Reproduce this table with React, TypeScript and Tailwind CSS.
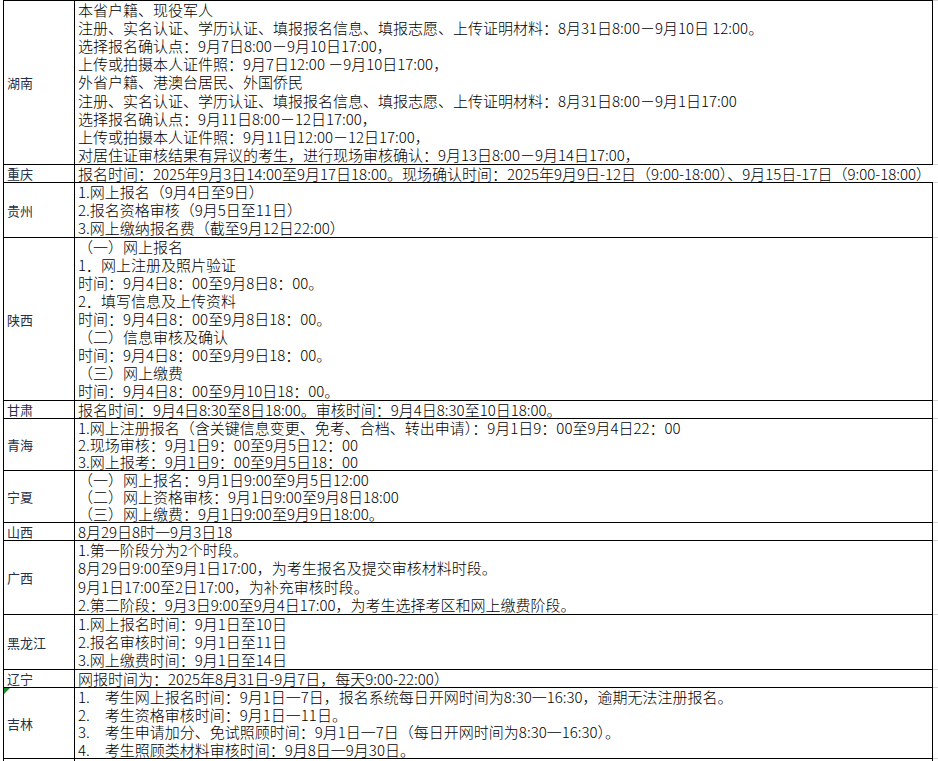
import React from "react";

type Row = {
  name: string;
  h: string;
  lh: number;
  lines: string[];
  overflow?: boolean;
  mark?: boolean;
};

const rows: Row[] = [
  {
    name: "湖南",
    h: "h-[164px]",
    lh: 18.1,
    lines: [
      "本省户籍、现役军人",
      "注册、实名认证、学历认证、填报报名信息、填报志愿、上传证明材料：8月31日8:00－9月10日 12:00。",
      "选择报名确认点：9月7日8:00－9月10日17:00，",
      "上传或拍摄本人证件照：9月7日12:00 －9月10日17:00，",
      "外省户籍、港澳台居民、外国侨民",
      "注册、实名认证、学历认证、填报报名信息、填报志愿、上传证明材料：8月31日8:00－9月1日17:00",
      "选择报名确认点：9月11日8:00－12日17:00，",
      "上传或拍摄本人证件照：9月11日12:00－12日17:00，",
      "对居住证审核结果有异议的考生，进行现场审核确认：9月13日8:00－9月14日17:00，",
    ],
  },
  {
    name: "重庆",
    h: "h-[18px]",
    lh: 17,
    overflow: true,
    lines: [
      "报名时间：2025年9月3日14:00至9月17日18:00。现场确认时间：2025年9月9日-12日（9:00-18:00）、9月15日-17日（9:00-18:00）",
    ],
  },
  {
    name: "贵州",
    h: "h-[55px]",
    lh: 18,
    lines: [
      "1.网上报名（9月4日至9日）",
      "2.报名资格审核（9月5日至11日）",
      "3.网上缴纳报名费（截至9月12日22:00）",
    ],
  },
  {
    name: "陕西",
    h: "h-[163px]",
    lh: 18,
    lines: [
      "（一）网上报名",
      "1．网上注册及照片验证",
      "时间：9月4日8：00至9月8日8：00。",
      "2．填写信息及上传资料",
      "时间：9月4日8：00至9月8日18：00。",
      "（二）信息审核及确认",
      "时间：9月4日8：00至9月9日18：00。",
      "（三）网上缴费",
      "时间：9月4日8：00至9月10日18：00。",
    ],
  },
  {
    name: "甘肃",
    h: "h-[18px]",
    lh: 17,
    lines: ["报名时间：9月4日8:30至8日18:00。审核时间：9月4日8:30至10日18:00。"],
  },
  {
    name: "青海",
    h: "h-[52px]",
    lh: 17,
    lines: [
      "1.网上注册报名（含关键信息变更、免考、合档、转出申请）：9月1日9：00至9月4日22：00",
      "2.现场审核：9月1日9：00至9月5日12：00",
      "3.网上报考：9月1日9：00至9月5日18：00",
    ],
  },
  {
    name: "宁夏",
    h: "h-[52px]",
    lh: 17,
    lines: [
      "（一）网上报名：9月1日9:00至9月5日12:00",
      "（二）网上资格审核：9月1日9:00至9月8日18:00",
      "（三）网上缴费：9月1日9:00至9月9日18:00。",
    ],
  },
  {
    name: "山西",
    h: "h-[18px]",
    lh: 17,
    lines: ["8月29日8时一9月3日18"],
  },
  {
    name: "广西",
    h: "h-[74px]",
    lh: 18.25,
    lines: [
      "1.第一阶段分为2个时段。",
      "8月29日9:00至9月1日17:00，为考生报名及提交审核材料时段。",
      "9月1日17:00至2日17:00，为补充审核时段。",
      "2.第二阶段：9月3日9:00至9月4日17:00，为考生选择考区和网上缴费阶段。",
    ],
  },
  {
    name: "黑龙江",
    h: "h-[55px]",
    lh: 18,
    lines: [
      "1.网上报名时间：9月1日至10日",
      "2.报名审核时间：9月1日至11日",
      "3.网上缴费时间：9月1日至14日",
    ],
  },
  {
    name: "辽宁",
    h: "h-[18px]",
    lh: 17,
    lines: ["网报时间为：2025年8月31日-9月7日，每天9:00-22:00）"],
  },
  {
    name: "吉林",
    h: "h-[71px]",
    lh: 17.5,
    mark: true,
    lines: [
      "1.\u3000考生网上报名时间：9月1日一7日，报名系统每日开网时间为8:30一16:30，逾期无法注册报名。",
      "2.\u3000考生资格审核时间：9月1日一11日。",
      "3.\u3000考生申请加分、免试照顾时间：9月1日一7日（每日开网时间为8:30一16:30）。",
      "4.\u3000考生照顾类材料审核时间：9月8日一9月30日。",
    ],
  },
  {
    name: "",
    h: "h-[40px]",
    lh: 18,
    lines: [
      "5.\u3000考生缴纳报名考试费时间：9月8日一9月30日，逾期视为自动放弃报名。",
    ],
  },
];

export default function App() {
  return (
    <div
      className="w-[938px] h-[761px] overflow-hidden bg-white text-black"
      style={{ fontFamily: '"Noto Sans CJK SC", "Noto Sans", sans-serif' }}
    >
      <div className="flex flex-col">
        <div className="flex h-px">
          <div className="w-[3px]" />
          <div className="w-[930px] bg-black" />
          <div className="flex-1 bg-[#d4d4d4]" />
        </div>
        {rows.map((r, i) => (
          <div key={i} className={`flex ${r.h} shrink-0`}>
            <div className="w-[3px] shrink-0" />
            <div className="relative w-[72px] shrink-0 border-l border-r border-b border-black flex items-center pl-[3px] text-[13px] text-[#26304a] leading-none">
              {r.mark && (
                <svg className="absolute left-0 top-0" width="6" height="6" viewBox="0 0 6 6">
                  <polygon points="0,0 6,0 0,6" fill="#1e8c2a" />
                </svg>
              )}
              {r.name}
            </div>
            <div
              className={`w-[858px] shrink-0 border-b border-black flex flex-col justify-center pl-[3px] text-[15px] font-light whitespace-nowrap ${
                r.overflow ? "overflow-visible relative z-10" : "border-r overflow-hidden"
              }`}
              style={{ lineHeight: `${r.lh}px` }}
            >
              {r.lines.map((l, j) => (
                <div key={j}>{l}</div>
              ))}
            </div>
            <div className="flex-1 border-b border-[#d4d4d4]" />
          </div>
        ))}
      </div>
    </div>
  );
}
